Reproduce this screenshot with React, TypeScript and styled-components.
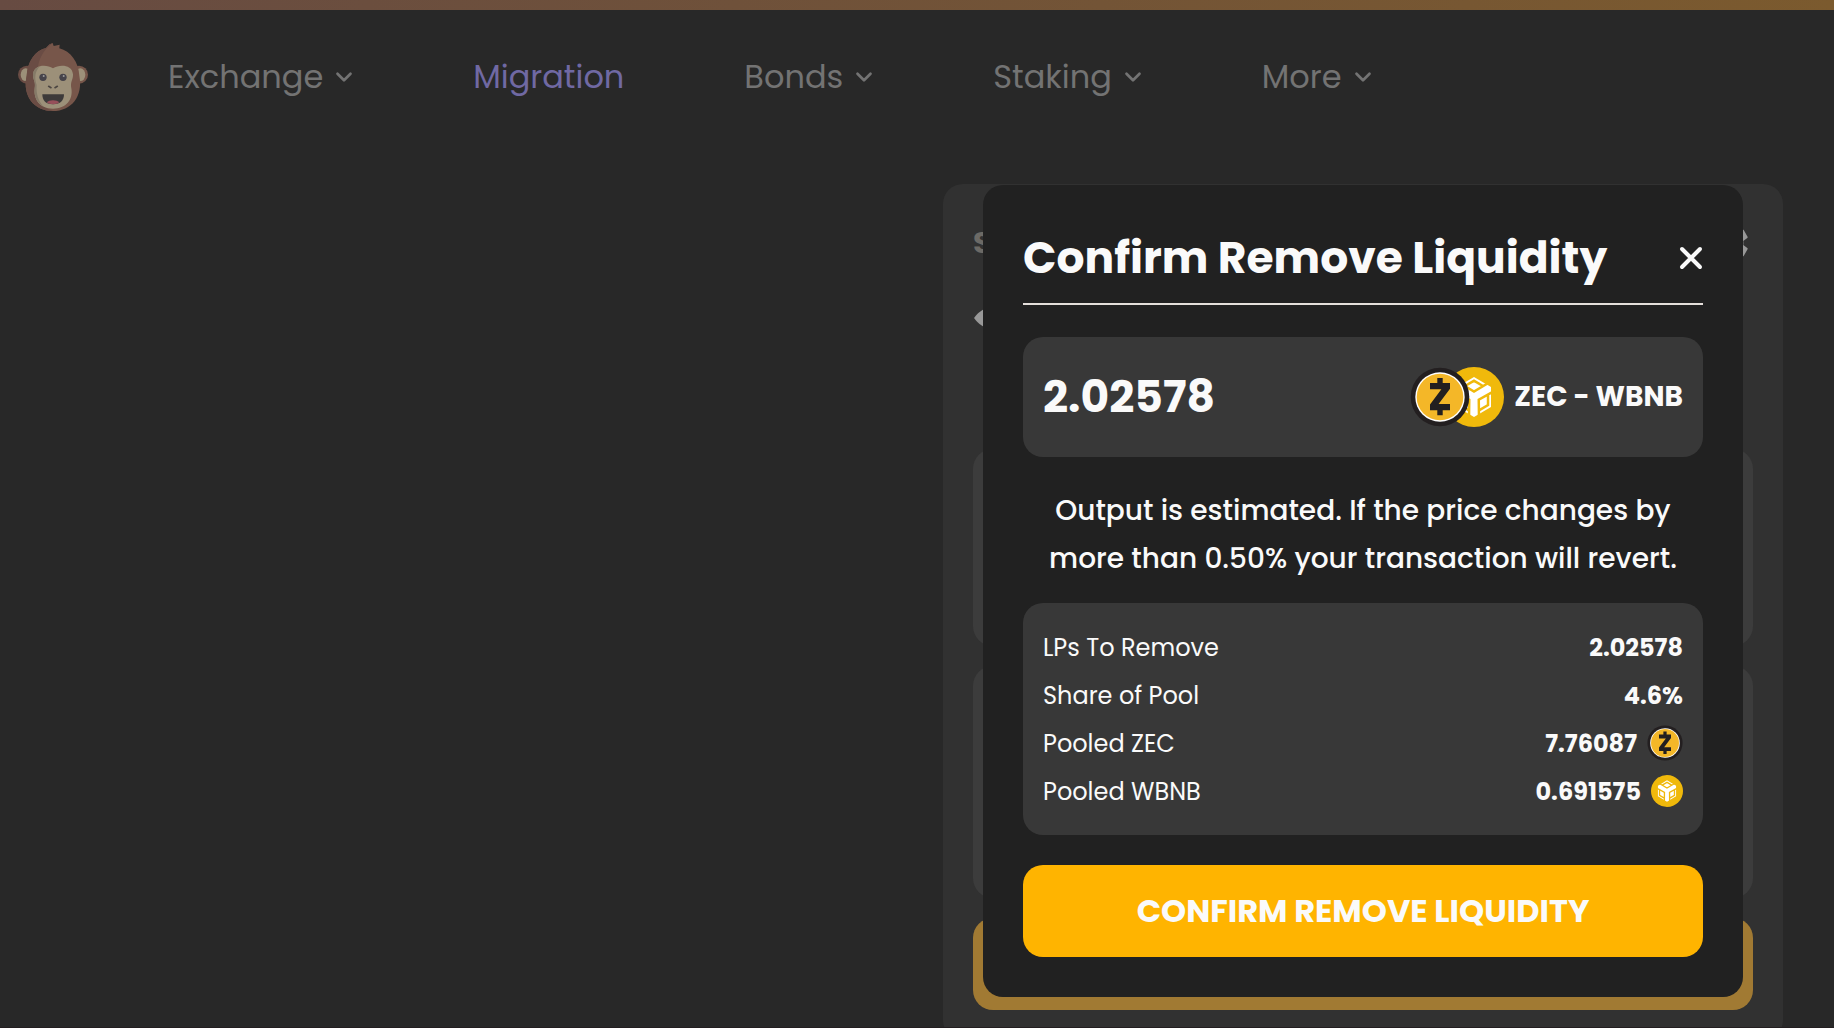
import React from "react";
import styled, { createGlobalStyle, css } from "styled-components";
import { FiChevronDown } from "react-icons/fi";
import { MdSettings } from "react-icons/md";

const GlobalStyle = createGlobalStyle`
  *, *::before, *::after { box-sizing: border-box; }
  body {
    margin: 0;
    background: #282828;
    color: #fafafa;
    font-family: Poppins, Inter, "Liberation Sans", sans-serif;
  }
  button { font-family: inherit; }
`;

const Page = styled.div`
  display: flex;
  flex-direction: column;
  height: 100vh;
  overflow: hidden;
  border-bottom: 1px solid #231e20;
`;

const TopStripe = styled.div`
  flex: none;
  height: 10px;
  background: linear-gradient(90deg, #674b42, #7b5a2e);
`;

const Header = styled.header`
  flex: none;
  display: flex;
  align-items: center;
  gap: 80px;
  height: 134px;
  padding: 0 18px;
`;

const LogoLink = styled.a`
  display: flex;
  width: 70px;
`;

const Nav = styled.nav`
  display: flex;
  align-items: center;
  gap: 120px;
`;

const navText = css<{ $active?: boolean }>`
  display: flex;
  align-items: center;
  gap: 8px;
  padding: 0;
  border: 0;
  background: none;
  color: ${(p) => (p.$active ? "#7069a3" : "#737373")};
  font-size: 32px;
  line-height: 48px;
  font-weight: 400;
  text-decoration: none;
  cursor: pointer;
`;

const NavButton = styled.button<{ $active?: boolean }>`
  ${navText}
  margin-right: -4px;
`;
const NavLink = styled.a<{ $active?: boolean }>`${navText}`;

const Main = styled.main`
  flex: none;
  display: flex;
  justify-content: flex-end;
  padding: 40px 51px 0 30px;
`;

const Panel = styled.section`
  flex: 0 1 840px;
  padding: 30px;
  border-radius: 20px;
  background: #313131;
`;

const PanelHeader = styled.div`
  display: flex;
  align-items: center;
  justify-content: space-between;
  height: 58px;
`;

const PanelTitle = styled.h2`
  margin: 0;
  color: #6c6a66;
  font-size: 30px;
  font-weight: 700;
`;

const IconButton = styled.button<{ $color: string }>`
  display: flex;
  padding: 0;
  border: 0;
  background: none;
  color: ${(p) => p.$color};
  cursor: pointer;
`;

const PanelTools = styled.div`
  display: flex;
  padding: 22px 0 107px;
`;

const PanelCard = styled.div<{ $height: number }>`
  height: ${(p) => p.$height}px;
  margin-bottom: 20px;
  border-radius: 20px;
  background: #3c3c3c;
`;

const PanelAction = styled.button`
  display: block;
  width: 100%;
  height: 92px;
  border: 0;
  border-radius: 20px;
  background: #a17a33;
`;

const Overlay = styled.div`
  position: fixed;
  inset: 0;
  display: flex;
  align-items: flex-start;
  justify-content: flex-end;
  padding: 185px 91px 0 40px;
`;

const Modal = styled.div`
  flex: 0 1 760px;
  display: flex;
  flex-direction: column;
  gap: 30px;
  padding: 40px;
  border-radius: 20px;
  background: #212121;
`;

const ModalHeader = styled.div`
  display: flex;
  align-items: center;
  justify-content: space-between;
  margin-bottom: 2px;
  padding-bottom: 12px;
  border-bottom: 2px solid #e5dfdb;
`;

const ModalTitle = styled.h1`
  margin: 0;
  font-size: 44px;
  line-height: 66px;
  font-weight: 700;
`;

const Card = styled.div`
  padding: 20px;
  border-radius: 20px;
  background: #383838;
`;

const AmountCard = styled(Card)`
  display: flex;
  align-items: center;
  justify-content: space-between;
  height: 120px;
`;

const Amount = styled.span`
  font-size: 44px;
  line-height: 66px;
  font-weight: 700;
`;

const Pair = styled.div`
  display: flex;
  align-items: center;
  gap: 10px;
  font-size: 28px;
  line-height: 42px;
  font-weight: 700;
`;

const PairIcons = styled.div`
  display: flex;
  svg:first-child {
    z-index: 1;
    margin-right: -26px;
  }
`;

const Details = styled.div`
  display: flex;
  flex-direction: column;
  gap: 20px;
`;

const Note = styled.p`
  margin: 0;
  font-size: 28px;
  line-height: 48px;
  font-weight: 500;
  text-align: center;
`;

const Row = styled.div`
  display: flex;
  align-items: center;
  justify-content: space-between;
  height: 48px;
  font-size: 24px;
`;

const RowValue = styled.span`
  display: flex;
  align-items: center;
  gap: 10px;
  font-weight: 700;
`;

const ConfirmButton = styled.button`
  height: 92px;
  border: 0;
  border-radius: 20px;
  background: #ffb400;
  color: #fafafa;
  font-size: 32px;
  font-weight: 700;
  text-transform: uppercase;
  cursor: pointer;
`;

const MonkeyLogo = () => (
  <svg width="70" height="68" viewBox="0 0 210 204" aria-hidden="true">
    <circle cx="27" cy="95" r="27" fill="#6a4c44" />
    <circle cx="183" cy="95" r="27" fill="#77564a" />
    <ellipse cx="23" cy="95" rx="15" ry="19" fill="#9c9079" />
    <ellipse cx="187" cy="95" rx="15" ry="19" fill="#9c9079" />
    <path d="M84 15 Q94 2 104 0 L107 9 L125 5 L124 16 C158 24 182 58 184 98 C196 160 160 204 105 204 C50 204 12 160 26 98 C28 56 52 22 84 15Z" fill="#77564a" />
    <path d="M84 15 Q94 2 104 0 C76 20 62 50 60 74 L52 150 C60 180 80 196 105 204 C50 204 12 160 26 98 C28 56 52 22 84 15Z" fill="#6a4c44" />
    <path d="M105 76 C86 64 48 64 45 94 C44 110 54 116 50 136 C46 170 66 197 105 197 C144 197 166 170 160 136 C156 116 166 110 165 94 C162 64 124 64 105 76Z" fill="#9c9079" />
    <path d="M64 71 C52 74 45 84 45 94 C44 110 54 116 50 136 C47 160 58 182 76 190 C60 174 54 150 56 126 C48 104 52 84 64 71Z" fill="#857a68" />
    <circle cx="75" cy="103" r="11" fill="#46434a" />
    <circle cx="135" cy="103" r="11" fill="#46434a" />
    <circle cx="77" cy="99" r="3" fill="#9a9a9a" />
    <circle cx="137" cy="99" r="3" fill="#9a9a9a" />
    <path d="M92 130 L99 134 M118 130 L111 134" stroke="#4b4541" strokeWidth="5" strokeLinecap="round" />
    <path d="M73 154 H138 C138 172 128 184 105 184 C82 184 73 172 73 154Z" fill="#3d3a3a" />
    <path d="M86 178 C94 170 116 170 124 178 Q118 184 105 184 Q92 184 86 178Z" fill="#96505a" />
  </svg>
);

const ZecIcon = ({ size }: { size: number }) => (
  <svg width={size} height={size} viewBox="0 0 60 60" aria-hidden="true">
    <circle cx="30" cy="30" r="29.300" fill="#231f20" />
    <circle cx="30" cy="30" r="24.700" fill="#fff" />
    <circle cx="30" cy="30" r="23.300" fill="#f4b728" />
    <path d="M27.300 11h5.400v5H40v5.800L28.600 37H40v6.300h-7.300v5h-5.400v-5H20v-5.800L31.400 22.300H20V16h7.300Z" fill="#231f20" />
  </svg>
);

const BnbIcon = ({ size }: { size: number }) => (
  <svg width={size} height={size} viewBox="0 0 60 60" aria-hidden="true">
    <circle cx="30" cy="30" r="30" fill="#f0b90b" />
    <path d="M30 10 L47 20 V40 L30 50 L13 40 V20Z" fill="#fff" />
    {[0, 120, 240].map((angle) => (
      <path
        key={angle}
        transform={`rotate(${angle} 30 30)`}
        d="M14 15 L30 24.500 L46 15 M21 19 L30 13.800 L39 19"
        fill="none"
        stroke="#f0b90b"
        strokeWidth="2.500"
      />
    ))}
  </svg>
);

const CaretTip = () => (
  <svg width="48" height="48" viewBox="0 0 48 48" aria-hidden="true">
    <path d="M1 24 Q5 18 13 14 V34 Q5 30 1 24Z" fill="currentColor" />
  </svg>
);

const CloseIcon = () => (
  <svg width="24" height="24" viewBox="0 0 24 24" aria-hidden="true">
    <path d="M3 3 L21 21 M21 3 L3 21" stroke="currentColor" strokeWidth="4" strokeLinecap="round" />
  </svg>
);

const navItems = [
  { label: "Exchange", menu: true },
  { label: "Migration", menu: false },
  { label: "Bonds", menu: true },
  { label: "Staking", menu: true },
  { label: "More", menu: true },
];

const rows = [
  { label: "LPs To Remove", value: "2.02578" },
  { label: "Share of Pool", value: "4.6%" },
  { label: "Pooled ZEC", value: "7.76087", icon: <ZecIcon size={36} /> },
  { label: "Pooled WBNB", value: "0.691575", icon: <BnbIcon size={32} /> },
];

export default function App() {
  return (
    <>
      <GlobalStyle />
      <Page>
        <TopStripe />
        <Header>
          <LogoLink href="#" aria-label="Home">
            <MonkeyLogo />
          </LogoLink>
          <Nav>
            {navItems.map((item) =>
              item.menu ? (
                <NavButton key={item.label} type="button">
                  {item.label}
                  <FiChevronDown size={26} strokeWidth={2.5} />
                </NavButton>
              ) : (
                <NavLink key={item.label} href="#migration" $active>
                  {item.label}
                </NavLink>
              )
            )}
          </Nav>
        </Header>
        <Main>
          <Panel>
            <PanelHeader>
              <PanelTitle>S</PanelTitle>
              <IconButton type="button" aria-label="Settings" $color="#989898">
                <MdSettings size={48} />
              </IconButton>
            </PanelHeader>
            <PanelTools>
              <IconButton type="button" aria-label="Back" $color="#989898">
                <CaretTip />
              </IconButton>
            </PanelTools>
            <PanelCard $height={197} />
            <PanelCard $height={232} />
            <PanelAction type="button" aria-label="Remove" />
          </Panel>
        </Main>
      </Page>
      <Overlay>
        <Modal role="dialog" aria-modal="true" aria-labelledby="modal-title">
          <ModalHeader>
            <ModalTitle id="modal-title">Confirm Remove Liquidity</ModalTitle>
            <IconButton type="button" aria-label="Close" $color="#fafafa">
              <CloseIcon />
            </IconButton>
          </ModalHeader>
          <AmountCard>
            <Amount>2.02578</Amount>
            <Pair>
              <PairIcons>
                <ZecIcon size={60} />
                <BnbIcon size={60} />
              </PairIcons>
              ZEC - WBNB
            </Pair>
          </AmountCard>
          <Details>
            <Note>
              Output is estimated. If the price changes by more than 0.50% your
              transaction will revert.
            </Note>
            <Card>
              {rows.map((row) => (
                <Row key={row.label}>
                  <span>{row.label}</span>
                  <RowValue>
                    {row.value}
                    {row.icon}
                  </RowValue>
                </Row>
              ))}
            </Card>
          </Details>
          <ConfirmButton type="button">Confirm Remove Liquidity</ConfirmButton>
        </Modal>
      </Overlay>
    </>
  );
}
